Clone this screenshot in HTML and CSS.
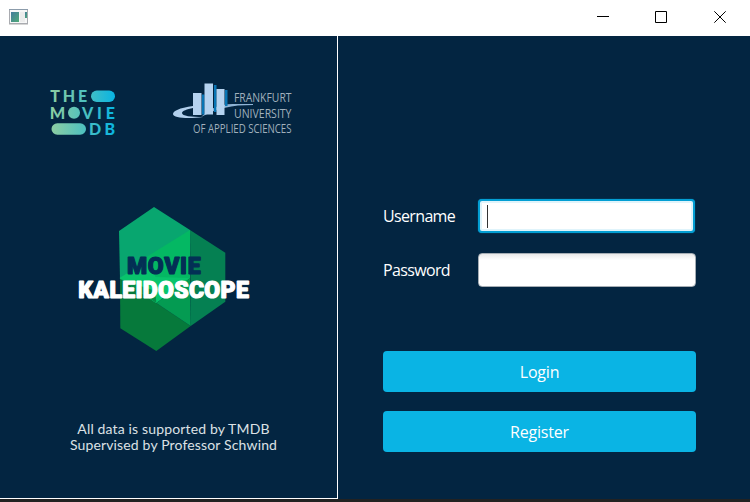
FILE: index.html
```
<!DOCTYPE html>
<html lang="en">
<head>
<meta charset="utf-8">
<title>Movie Kaleidoscope</title>
<link rel="stylesheet" href="styles.css">
</head>
<body>
<div class="window">
  <header class="titlebar">
    <svg class="app-icon" width="20" height="17" viewBox="0 0 20 17">
      <defs><linearGradient id="app" x1="0" y1="0" x2="1" y2="1"><stop offset="0" stop-color="#437b9b"/><stop offset="1" stop-color="#50aa78"/></linearGradient></defs>
      <rect x="0.5" y="0.5" width="18" height="14" fill="#f7f7f7" stroke="#a9abb0"/>
      <path d="M0 .5h19" stroke="#8c9cab"/>
      <path d="M0 15.5h19" stroke="#d5d5d5"/>
      <rect x="2" y="3" width="8" height="10" fill="url(#app)"/>
      <rect x="11" y="3" width="5" height="10" fill="#ececec"/>
      <rect x="16" y="3" width="2" height="6" fill="url(#app)"/>
    </svg>
    <div class="controls">
      <svg width="12" height="12" viewBox="0 0 12 12"><path d="M0 5.5h12"/></svg>
      <svg width="12" height="12" viewBox="0 0 12 12"><path d="M.5.5h11v11H.5z"/></svg>
      <svg width="12" height="12" viewBox="0 0 12 12"><path d="M.3.3l11.4 11.4M11.7.3L.3 11.7"/></svg>
    </div>
  </header>
  <main class="content">
    <section class="brand">
      <div class="partners">
        <svg width="66" height="46" viewBox="50 90 66 46">
          <defs><linearGradient id="tmdb" gradientUnits="userSpaceOnUse" x1="50" y1="0" x2="115" y2="0"><stop offset="0" stop-color="#90cea1"/><stop offset=".55" stop-color="#4cc0c0"/><stop offset="1" stop-color="#08b4e3"/></linearGradient></defs>
          <g fill="url(#tmdb)" class="tmdb-text">
            <text x="50.300" y="102" textLength="37" lengthAdjust="spacing">THE</text>
            <text x="49.800" y="118.600" textLength="15.500" lengthAdjust="spacingAndGlyphs">M</text>
            <text x="82" y="118.600" textLength="33" lengthAdjust="spacing">VIE</text>
            <text x="89" y="134.800" textLength="26" lengthAdjust="spacing">DB</text>
            <rect x="91" y="90.500" width="24" height="11.500" rx="5.750"/>
            <circle cx="74" cy="112.800" r="6"/>
            <rect x="51.500" y="123.200" width="34.500" height="11.600" rx="5.800"/>
          </g>
        </svg>
        <svg width="120" height="54" viewBox="172 82 120 54">
          <path d="M193 106c-14 2-20 5-20 8 0 4 15 5 30 3-12 0-21-1-21-4 0-2 5-4 11-5z" fill="#b2d0ed"/>
          <path d="M201 117c8-8 18-13 32-13h20v.9c-22 0-35 3-52 12.100z" fill="#8fb4d6"/>
          <path d="M202 94.500h2.500v20H202zM214 85h2.500v27H214zM225 90h2.500v16H225z" fill="#0875b4"/>
          <path d="M193 93h8.500v22H193zM204.500 83.500h8.500v31h-8.500zM216.500 89h8v26h-8z" fill="#b5d3f0"/>
          <g class="uni-text">
            <text x="234" y="102.300" textLength="57.500" lengthAdjust="spacingAndGlyphs">FRANKFURT</text>
            <text x="234" y="117.500" textLength="57.500" lengthAdjust="spacingAndGlyphs">UNIVERSITY</text>
            <text x="193" y="132.800" textLength="98.500" lengthAdjust="spacingAndGlyphs">OF APPLIED SCIENCES</text>
          </g>
        </svg>
      </div>
      <svg class="logo" width="190" height="165" viewBox="70 195 190 165">
        <path d="M154 207l36 23v48l-34 25-36-24-1-48z" fill="#08a66f"/>
        <path d="M190 230l35.300 22.700v49L190.700 326z" fill="#058052"/>
        <path d="M120 279l36.300 24 34.400 23-34.400 25-36-22.700z" fill="#06793b"/>
        <path d="M190 230v48l-34 25-36-24 28-23z" fill="#04b863"/>
        <path d="M119.500 278l29-18 7 17 34.500 1-34 25z" fill="#08c46c"/>
        <path d="M190 278l.700 48-34.400-23z" fill="#049b52"/>
        <path d="M120 279l36.300 24-1-12z" fill="#078b47"/>
        <text class="logo-movie" x="127" y="273.700" textLength="73.500" lengthAdjust="spacing">MOVIE</text>
        <text class="logo-name" x="78.300" y="297.700" textLength="170.500" lengthAdjust="spacing">KALEIDOSCOPE</text>
      </svg>
      <p class="credit">All data is supported by TMDB<br>Supervised by Professor Schwind</p>
    </section>
    <form class="login">
      <label class="row"><span>Username</span><span class="field focused"><i class="caret"></i></span></label>
      <label class="row"><span>Password</span><span class="field"></span></label>
      <div class="actions">
        <button type="button">Login</button>
        <button type="button">Register</button>
      </div>
    </form>
  </main>
</div>
</body>
</html>
```
FILE: styles.css
```
* { box-sizing: border-box; }
body { margin: 0; background: #222; overflow: hidden; }
svg { overflow: visible; }
.window { width: 750px; height: 502px; font-family: "Open Sans", sans-serif; }
.titlebar { height: 36px; background: #fff; display: flex; justify-content: space-between; padding: 9px 24px 0 9px; }
.controls { display: flex; gap: 47px; padding-top: 2px; }
.controls svg { fill: none; stroke: #000; stroke-width: 1; }
.controls svg:first-child { margin-right: -1px; }
.content { height: 463px; display: flex; background: #032541; }
.brand { width: 338px; border-right: 1px solid #fff; border-bottom: 1px solid #fff; display: flex; flex-direction: column; }
.partners { display: flex; align-items: flex-start; gap: 56px; padding: 46px 0 0 50px; height: 159px; }
.partners svg:first-child { margin-top: 8px; }
.tmdb-text { font: 900 16px Lato, sans-serif; }
.uni-text { font: 400 12.5px "Open Sans", sans-serif; fill: #a0b0bc; }
.logo { margin-left: 70px; flex: none; }
.logo-movie, .logo-name { font-family: Roboto, sans-serif; font-weight: 900; font-size: 23px; stroke-width: 1.2; stroke-linejoin: bevel; }
.logo-movie { fill: #032f55; stroke: #032f55; }
.logo-name { fill: #fff; stroke: #fff; }
.credit { margin: 61px 0 0 10px; text-align: center; color: #dce1e5; font: 14px/16px Lato, sans-serif; letter-spacing: .15px; white-space: nowrap; }
.login { flex: 1; padding: 163px 54px 0 45px; }
.row { display: flex; justify-content: space-between; align-items: center; height: 34px; margin-bottom: 20px; color: #fff; font-size: 16px; letter-spacing: -.65px; }
.field { width: 218px; height: 34px; border: 1px solid #a5adb4; border-radius: 4px; background: linear-gradient(#e9e9e9, #fff 6px); display: flex; align-items: center; padding-left: 8px; }
.focused { border: 2px solid #039ed3; width: 217px; margin-right: 1px; background: #fff; box-shadow: inset 0 0 0 2px #e0f4fb, 0 0 1px #039ed3; padding-left: 7px; }
.caret { width: 1px; height: 23px; background: #333; }
.actions { display: flex; flex-direction: column; gap: 19px; margin-top: 64px; }
.row + .row { margin-bottom: 0; }
button { height: 41px; padding: 0; border: 0; border-radius: 4px; background: #0ab4e4; color: #fff; font: 16px "Open Sans", sans-serif; letter-spacing: -.2px; }
```
